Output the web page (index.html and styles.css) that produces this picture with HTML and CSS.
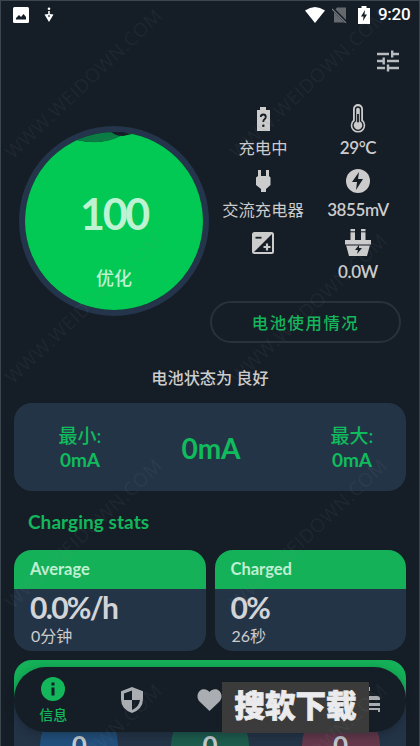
FILE: index.html
```html
<!DOCTYPE html>
<html lang="zh-CN">
<head>
<meta charset="utf-8">
<title>Battery</title>
<link rel="stylesheet" href="styles.css">
</head>
<body>
<div class="screen">
  <header class="status-bar">
    <svg class="sb-image" viewBox="0 0 16 16"><rect width="16" height="16" rx="1.5" fill="#fff"/><path d="M3 12.500V11l3-3 2 2 2.500-3 2.500 3v2.500z" fill="#151d26"/></svg>
    <svg class="sb-down" viewBox="0 0 10 16"><circle cx="5" cy="1.700" r="1.300"/><path d="M4.200 4h1.600v3L9.500 7.500 5 15 .5 7.500 4.200 7z"/><circle cx="5" cy="9" r="1.200" fill="#75808a"/></svg>
    <span class="spacer"></span>
    <svg class="sb-wifi" viewBox="0 0 20 16"><path d="M0 3.500Q10-3.500 20 3.500L10 16z"/></svg>
    <svg class="sb-sim" viewBox="0 0 16 16"><path d="M5 .5h9v15H2V4z" fill="#65696e"/><path d="M0 1l15 15" stroke="#151d26" stroke-width="3"/><path d="M0 2l14 14" stroke="#777b80" stroke-width="1.200"/></svg>
    <svg class="sb-batt" viewBox="0 0 12 18"><path d="M3.500 0h5v2H12v16H0V2h3.500z"/><path d="M7 4L3 10.500h2.500L5 15l4-6.500H6.500z" fill="#151d26"/></svg>
    <span class="clock">9:20</span>
  </header>
  <div class="toolbar">
    <svg class="tune" viewBox="0 0 22 22"><path d="M0 4h12M15 4h7M15.200 0.500v7M0 11h6M10 11h12M6.700 7.500v7M0 18h8M12 18h10M11 14.500v7"/></svg>
  </div>

  <section class="overview">
    <div class="gauge">
      <svg class="wave" viewBox="0 0 178 178"><path d="M0 0H52V8Q76 14 96 3L107 0H178V178H0z" fill="#02c953"/><path d="M52 0V8Q76 14 96 4Q91 3 88 0z" fill="#0b7c43"/><path d="M86 0Q91 4 98 4L107 2V0z" fill="#151d26"/></svg>
      <span class="gauge-value">100</span>
      <span class="gauge-label">优化</span>
    </div>
    <div class="details">
      <div class="metrics">
        <div class="metric"><svg viewBox="0 0 28 30"><path d="M11 3h6v3h4v21H8V6h3z"/><path d="M11.700 13q.3-2.500 2.600-2.500 2.500 0 2.500 2.500 0 1.200-1.300 2.200T14.300 18" class="cut-line"/><circle cx="14.300" cy="21.800" r="1.300" class="cut"/></svg><span>充电中</span></div>
        <div class="metric"><svg viewBox="0 0 28 30"><path d="M9 16V5a5 5 0 0 1 10 0v11a7.300 7.300 0 1 1-10 0z"/><path d="M11.500 17V5.500a2.500 2.500 0 0 1 5 0V17a5 5 0 1 1-5 0z" fill="none" stroke="#151d26" stroke-width="1.400"/><path d="M14 10v11" class="cut-line"/><circle cx="14" cy="21.500" r="3.200"/></svg><span class="latin">29°C</span></div>
        <div class="metric"><svg viewBox="0 0 28 30"><path d="M9 4h3v6h5V4h3v6l1.500 1.500V19L17 23v3h-5v-3l-5-4v-7.500L9 10z"/></svg><span>交流充电器</span></div>
        <div class="metric"><svg viewBox="0 0 28 30"><circle cx="14" cy="15" r="12"/><path d="M15 6L8 16h5l-1 8 7-11h-5z" class="cut"/></svg><span class="latin">3855mV</span></div>
        <div class="metric"><svg viewBox="0 0 28 30"><rect x="3" y="4" width="22" height="22" rx="2.500"/><path d="M23 6v18H5z" class="cut"/><path d="M6.500 9.700h6" class="cut-line"/><path d="M14.500 19h7M18 15.500v7" stroke="#ccc" stroke-width="2.200"/></svg></div>
        <div class="metric"><svg viewBox="0 0 28 30"><path d="M6.500 1H11v11H6.500zM17 1h4.500v11H17zM1 12h26v5h-1l-3 11H5L2 17H1z"/><path d="M1 17h26M6 3.800h5M17 3.800h5" stroke="#151d26" stroke-width="1"/><path d="M15 17l-4 5h3l-1 4 5-6h-3z" class="cut"/></svg><span class="latin">0.0W</span></div>
      </div>
      <button class="usage">电池使用情况</button>
    </div>
  </section>

  <p class="condition">电池状态为 良好</p>

  <section class="current">
    <div class="extreme"><span>最小:</span><span class="latin">0mA</span></div>
    <div class="now">0mA</div>
    <div class="extreme"><span>最大:</span><span class="latin">0mA</span></div>
  </section>

  <h2 class="heading">Charging stats</h2>
  <section class="stats">
    <article class="stat"><h3>Average</h3><div class="stat-body"><b>0.0%/h</b><span>0分钟</span></div></article>
    <article class="stat"><h3>Charged</h3><div class="stat-body"><b>0%</b><span>26秒</span></div></article>
  </section>
  <section class="sessions">
    <div class="sessions-head"></div>
    <div class="rings"><span class="ring blue">0</span><span class="ring green">0</span><span class="ring red">0</span></div>
  </section>

  <nav class="nav">
    <div class="tab active"><svg viewBox="0 0 24 24"><circle cx="12" cy="12" r="12"/><path d="M10.500 5.500h3v3h-3zM10.500 10.500h3v8h-3z" fill="#151d26"/></svg><span>信息</span></div>
    <div class="tab"><svg class="shield" viewBox="0 0 22 26"><path d="M11 0l11 4.200V12q0 10-11 14Q0 22 0 12V4.200z"/><path d="M11 3.500v9.500H3V6.500zM11 13h8q-1 7-8 10z" fill="#151d26"/></svg></div>
    <div class="tab"><svg class="heart" viewBox="0 0 24 22"><path d="M12 22L2 12.500C-1 9-.5 4 2.500 1.700 5.500-.8 9.500-.1 12 3c2.500-3.100 6.500-3.800 9.500-1.300C24.500 4 25 9 22 12.500z"/></svg></div>
    <div class="tab"></div>
    <div class="tab"><svg class="layers" viewBox="0 0 28 26"><path d="M14 0h3v4h-3zM2 9h22q3 0 3 3v1H2zM2 16h25v3H2zM2 21h25v2H2zM25 22h2v3h-2z"/></svg></div>
  </nav>
  <div class="banner">搜软下载</div>

  <svg class="watermark" viewBox="0 0 420 746">
    <g transform="translate(13 160) rotate(-43.500)"><text textLength="207">WWW.WEIDOWN.COM</text></g>
    <g transform="translate(238 160) rotate(-43.500)"><text textLength="207">WWW.WEIDOWN.COM</text></g>
    <g transform="translate(13 385) rotate(-43.500)"><text textLength="207">WWW.WEIDOWN.COM</text></g>
    <g transform="translate(238 385) rotate(-43.500)"><text textLength="207">WWW.WEIDOWN.COM</text></g>
    <g transform="translate(13 610) rotate(-43.500)"><text textLength="207">WWW.WEIDOWN.COM</text></g>
    <g transform="translate(238 610) rotate(-43.500)"><text textLength="207">WWW.WEIDOWN.COM</text></g>
    <g transform="translate(13 835) rotate(-43.500)"><text textLength="207">WWW.WEIDOWN.COM</text></g>
    <g transform="translate(238 835) rotate(-43.500)"><text textLength="207">WWW.WEIDOWN.COM</text></g>
  </svg>
</div>
</body>
</html>
```

FILE: styles.css
```css
* { box-sizing: border-box; }
body, p, h2, h3 { margin: 0; }
body { background: #151d26; }
svg { display: block; }

.screen {
  position: relative;
  width: 420px;
  height: 746px;
  overflow: hidden;
  background: #151d26;
  border: 1px solid #3c464f;
  border-bottom: 0;
  color: #ccc;
  font-family: Lato, "Noto Sans CJK SC", sans-serif;
}

.status-bar { display: flex; align-items: center; height: 27px; padding: 0 8px 0 12px; fill: #fff; }
.spacer { flex: 1; }
.sb-image { width: 16px; height: 16px; }
.sb-down { width: 10px; height: 16px; margin-left: 15px; }
.sb-wifi { width: 20px; height: 16px; margin-right: 7px; }
.sb-sim { width: 16px; height: 16px; margin-right: 10px; }
.sb-batt { width: 12px; height: 18px; margin-right: 8px; }
.clock { font: 500 17px/27px Roboto, sans-serif; color: #fff; width: 33px; white-space: nowrap; letter-spacing: -.3px; }

.toolbar { display: flex; justify-content: flex-end; padding: 22px 20px 0 0; }
.tune { width: 22px; height: 22px; stroke: #b9bcbf; stroke-width: 2.4; fill: none; }

.overview { display: flex; padding-left: 18px; margin-top: 31px; height: 240px; }
.gauge {
  position: relative;
  display: flex;
  flex-direction: column;
  align-items: center;
  width: 190px;
  height: 190px;
  margin-top: 23px;
  flex: none;
  border: 6px solid #24344a;
  border-radius: 50%;
  overflow: hidden;
  color: #bdf2d2;
}
.wave { position: absolute; inset: 0; width: 100%; height: 100%; }
.gauge-value { position: relative; margin-top: 56px; font-size: 43px; line-height: 52px; font-weight: 700; letter-spacing: -2.3px; }
.gauge-label { position: relative; margin-top: 25px; font-size: 18px; line-height: 26px; font-weight: 500; }

.details { width: 193px; flex: none; }
.metrics { display: grid; grid-template-columns: 98px 92px; grid-auto-rows: 62px; margin-left: 5px; }
.metric { display: flex; flex-direction: column; align-items: center; white-space: nowrap; font-size: 16.3px; }
.metric svg { width: 28px; height: 30px; margin-top: 1px; fill: #ccc; }
.metric span { line-height: 28px; }
.metric .latin { font-size: 17px; font-weight: 600; letter-spacing: -.4px; line-height: 27px; }
.metrics .cut { fill: #151d26; }
.metrics .cut-line { fill: none; stroke: #151d26; stroke-width: 1.8; }
.usage {
  display: block;
  width: 191px;
  height: 42px;
  margin: 12px 0 0 1px;
  padding: 0;
  border: 2px solid #29313b;
  border-radius: 21px;
  background: none;
  color: #13b65b;
  font: 500 16.4px/37px "Noto Sans CJK SC", sans-serif;
  letter-spacing: 1.5px;
}

.condition { margin-top: 22px; text-align: center; font-size: 16.2px; line-height: 26px; font-weight: 500; }

.current {
  display: grid;
  grid-template-columns: 132px 1fr 108px;
  align-items: center;
  height: 88px;
  margin: 12px 13px 0;
  border-radius: 18px;
  background: #243447;
  color: #10bb5c;
  text-align: center;
}
.extreme { display: flex; flex-direction: column; font-size: 19px; font-weight: 500; line-height: 24px; padding-top: 2px; }
.extreme .latin { font-weight: 700; }
.now { margin-left: -22px; font-size: 28px; font-weight: 700; line-height: 34px; padding-top: 1px; }

.heading { margin: 18px 0 0 27px; font-size: 19px; line-height: 26px; font-weight: 700; color: #13b65b; letter-spacing: .05px; }
.stats { display: grid; grid-template-columns: 1fr 1fr; gap: 9px; margin: 15px 13px 0; }
.stat { height: 101px; border-radius: 18px; background: #243447; overflow: hidden; }
.stat h3 { height: 39px; padding-left: 16px; background: #14b158; color: #c0efd3; font-size: 16.5px; line-height: 38px; }
.stat-body { display: flex; flex-direction: column; padding-left: 16px; }
.stat-body b { font-size: 30px; line-height: 36px; color: #d2d4d8; letter-spacing: -1.7px; }
.stat-body span { font-size: 16px; line-height: 22px; padding-left: 1px; }

.sessions { height: 110px; margin: 9px 13px 0; border-radius: 18px 18px 0 0; background: #243447; overflow: hidden; }
.sessions-head { height: 38px; background: #14b158; }
.rings { display: grid; grid-template-columns: repeat(3, 1fr); justify-items: center; padding-top: 8px; }
.ring { width: 78px; height: 78px; border-radius: 50%; text-align: center; font-size: 26px; font-weight: 700; line-height: 78px; color: #c5cbd0; }
.blue { background: #214f7c; }
.green { background: #1d5c4d; }
.red { background: #64384a; }

.nav {
  position: absolute;
  left: 13px;
  top: 666px;
  display: grid;
  grid-template-columns: repeat(5, 1fr);
  width: 392px;
  height: 65px;
  border-radius: 32px;
  background: #151d26;
  box-shadow: 0 3px 8px #10182066;
}
.tab { display: flex; flex-direction: column; align-items: center; justify-content: center; fill: #aaaeb2; }
.active { fill: #13b65b; color: #13b65b; font-size: 14px; font-weight: 500; line-height: 22px; padding-top: 4px; }
.active svg { width: 24px; height: 24px; margin-bottom: 3px; }
.shield { width: 22px; height: 26px; }
.heart { width: 25px; height: 22px; }
.layers { width: 28px; height: 26px; }
.banner {
  position: absolute;
  left: 221px;
  top: 681px;
  width: 147px;
  height: 51px;
  background: #3b3b3b;
  color: #ebebed;
  text-align: center;
  font: 900 30.5px/44px "Noto Sans CJK SC", sans-serif;
  -webkit-text-stroke: .8px #ebebed;
}
.watermark { position: absolute; left: -1px; top: -1px; width: 420px; height: 746px; pointer-events: none; }
.watermark text { font: 19px "Open Sans", sans-serif; fill: #7c8790; fill-opacity: .1; }
```
